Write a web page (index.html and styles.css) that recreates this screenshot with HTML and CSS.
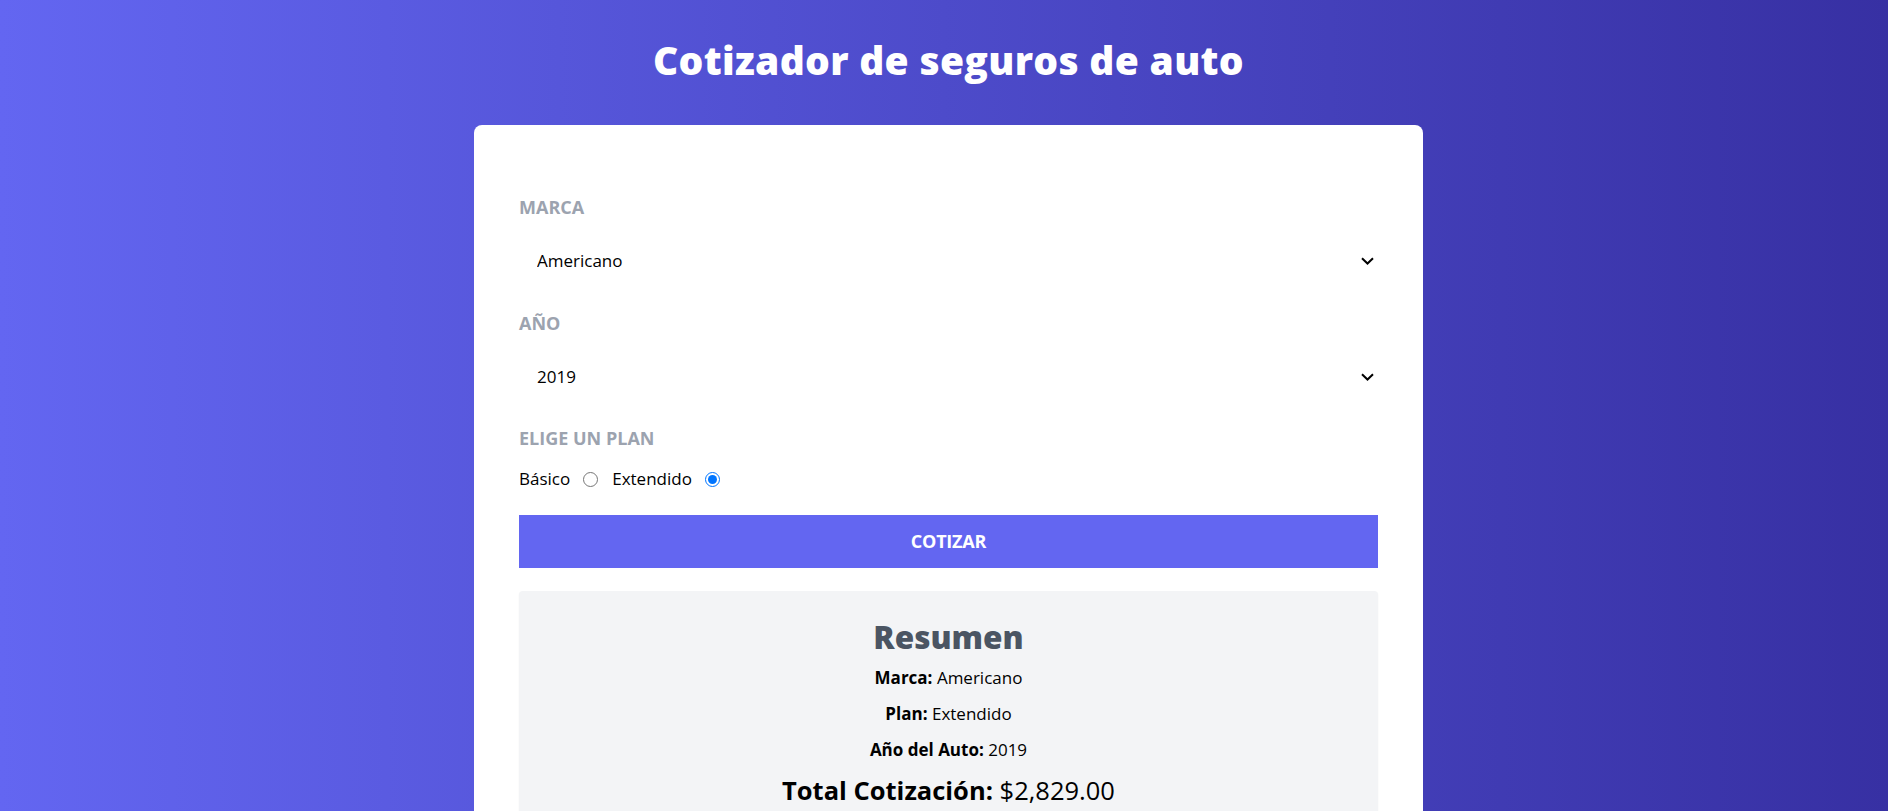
FILE: index.html
```html
<!DOCTYPE html>
<html lang="es">
<head>
<meta charset="utf-8">
<title>Cotizador de seguros de auto</title>
<link rel="stylesheet" href="styles.css">
</head>
<body>
<div class="page">
  <h1 class="title">Cotizador de seguros de auto</h1>
  <div class="card">
    <form class="form">
      <div class="field">
        <label class="label">Marca</label>
        <div class="select-wrap">
          <select class="select">
            <option>Americano</option>
            <option>Europeo</option>
            <option>Asiático</option>
          </select>
          <svg class="chevron" width="13" height="8" viewBox="0 0 13 8"><path d="M1 1.2 L6.5 6.5 L12 1.2" fill="none" stroke="#000" stroke-width="2"/></svg>
        </div>
      </div>
      <div class="field">
        <label class="label">Año</label>
        <div class="select-wrap">
          <select class="select">
            <option>2019</option>
            <option>2018</option>
          </select>
          <svg class="chevron" width="13" height="8" viewBox="0 0 13 8"><path d="M1 1.2 L6.5 6.5 L12 1.2" fill="none" stroke="#000" stroke-width="2"/></svg>
        </div>
      </div>
      <div class="field">
        <label class="label">Elige un plan</label>
        <div class="radios">
          <label class="radio-label">Básico</label>
          <input class="radio" type="radio" name="plan" value="basico">
          <label class="radio-label">Extendido</label>
          <input class="radio" type="radio" name="plan" value="extendido" checked>
        </div>
      </div>
      <button type="button" class="button">Cotizar</button>
    </form>
    <div class="summary">
      <h2 class="summary-title">Resumen</h2>
      <p class="summary-line"><b>Marca:</b> Americano</p>
      <p class="summary-line"><b>Plan:</b> Extendido</p>
      <p class="summary-line"><b>Año del Auto:</b> 2019</p>
      <p class="summary-total"><b>Total Cotización:</b> $2,829.00</p>
    </div>
  </div>
</div>
</body>
</html>
```

FILE: styles.css
```css
* { box-sizing: border-box; }
html, body { margin: 0; padding: 0; }
body {
  font-family: "Open Sans", "Noto Sans", sans-serif;
  font-size: 17px;
  line-height: 24px;
  color: #000;
  background: linear-gradient(to right, #6366f1, #3730a3);
  min-height: 100vh;
  overflow: hidden;
}
.page {
  display: flex;
  flex-direction: column;
  align-items: center;
  padding-left: 9px;
}
.title {
  margin: 36px 0 0;
  font-size: 39px;
  line-height: 48px;
  font-weight: 800;
  color: #fff;
  letter-spacing: 0.3px;
}
.card {
  margin-top: 41px;
  width: 949px;
  background: #fff;
  border-radius: 8px;
  padding: 68px 45px 40px;
}
.form { display: flex; flex-direction: column; }
.field { display: flex; flex-direction: column; margin-bottom: 23.5px; }
.label {
  font-size: 18px;
  line-height: 28px;
  font-weight: 700;
  text-transform: uppercase;
  color: #9ca3af;
}
.select-wrap { position: relative; margin-top: 16px; }
.select {
  display: block;
  width: 100%;
  appearance: none;
  -webkit-appearance: none;
  border: none;
  background: #fff;
  font-family: inherit;
  font-size: 17px;
  line-height: 24px;
  padding: 12px 14px 12px 18px;
  color: #000;
  outline: none;
}
.chevron {
  position: absolute;
  right: 4px;
  top: 20px;
}
.radios {
  display: flex;
  align-items: center;
  margin-top: 15px;
  line-height: 24px;
}
.radio-label { font-size: 17px; }
.radio {
  width: 15px;
  height: 15px;
  margin: 1px 14px 0 13px;
}
.button {
  margin-top: 0;
  width: 100%;
  height: 53px;
  border: none;
  background: #6366f1;
  color: #fff;
  font-family: inherit;
  font-size: 18px;
  font-weight: 700;
  text-transform: uppercase;
  letter-spacing: -0.2px;
}
.summary {
  margin-top: 23.5px;
  background: #f3f4f6;
  border-radius: 4px;
  box-shadow: 0 1px 2px rgba(0,0,0,0.06);
  padding: 28px 20px 30px;
  text-align: center;
}
.summary-title {
  margin: 0;
  font-size: 31.5px;
  line-height: 36px;
  font-weight: 800;
  color: #4b5563;
}
.summary-line {
  margin: 12px 0 0;
  font-size: 17px;
  line-height: 24px;
}
.summary-line:first-of-type { margin-top: 10.5px; }
.summary-total {
  margin: 12px 0 0;
  font-size: 25.5px;
  line-height: 32px;
}
```
